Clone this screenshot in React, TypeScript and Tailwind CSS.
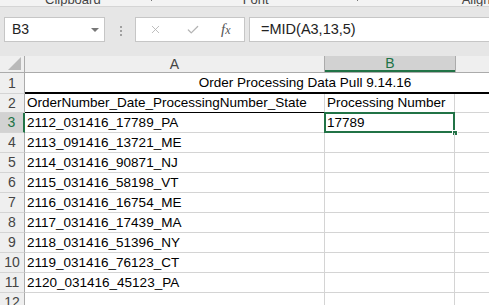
import { X, Check } from "lucide-react";

const rows: { n: number; a: string; b?: string }[] = [
  { n: 3, a: "2112_031416_17789_PA", b: "17789" },
  { n: 4, a: "2113_091416_13721_ME" },
  { n: 5, a: "2114_031416_90871_NJ" },
  { n: 6, a: "2115_031416_58198_VT" },
  { n: 7, a: "2116_031416_16754_ME" },
  { n: 8, a: "2117_031416_17439_MA" },
  { n: 9, a: "2118_031416_51396_NY" },
  { n: 10, a: "2119_031416_76123_CT" },
  { n: 11, a: "2120_031416_45123_PA" },
  { n: 12, a: "" },
];

const font = { fontFamily: '"Liberation Sans", Arial, sans-serif' };

function RowHead({ n, active }: { n: number; active?: boolean }) {
  return (
    <div
      className={
        "flex h-full w-[25px] shrink-0 items-center justify-center border-b border-[#d4d4d4] text-[14px] " +
        (active
          ? "border-r-2 border-r-[#217346] bg-[#d2d2d2] text-[#217346]"
          : "border-r border-r-[#ababab] bg-[#efefef] text-[#444]")
      }
    >
      {n}
    </div>
  );
}

export default function App() {
  return (
    <div className="h-[305px] w-[489px] overflow-hidden bg-white text-black" style={font}>
      {/* ribbon group labels, mostly scrolled off */}
      <div className="h-[7px] overflow-hidden border-b border-[#d5d5d5] bg-[#f3f3f3]">
        <div className="-mt-[10px] flex items-start text-[13px] text-[#444]">
          <span className="ml-[45px]">Clipboard</span>
          <span className="ml-[50px] mt-[7px] h-[4px] w-[4px] border-b border-r border-[#777]" />
          <span className="ml-[8px] mt-[6px] h-[10px] w-px bg-[#c8c8c8]" />
          <span className="ml-[83px]">Font</span>
          <span className="ml-[88px] mt-[7px] h-[4px] w-[4px] border-b border-r border-[#777]" />
          <span className="ml-[8px] mt-[6px] h-[10px] w-px bg-[#c8c8c8]" />
          <span className="ml-[96px]">Alignment</span>
        </div>
      </div>

      {/* formula bar */}
      <div className="flex h-[49px] items-start bg-[#e6e6e6] pt-[10px]">
        <div className="ml-[4px] flex h-[25px] w-[101px] items-center justify-between border border-[#c6c6c6] bg-white pl-[7px] pr-[5px] text-[14px] text-[#222]">
          <span>B3</span>
          <span className="h-0 w-0 border-x-[4px] border-t-[4px] border-x-transparent border-t-[#777]" />
        </div>
        <div className="ml-[15px] mt-[9px] flex flex-col gap-[2px]">
          <span className="h-[2px] w-[2px] bg-[#a0a0a0]" />
          <span className="h-[2px] w-[2px] bg-[#a0a0a0]" />
          <span className="h-[2px] w-[2px] bg-[#a0a0a0]" />
        </div>
        <div className="ml-[13px] flex h-[25px] w-[110px] items-center border border-[#c6c6c6] bg-white">
          <X className="ml-[13px] h-[13px] w-[13px] text-[#b4b4b4]" strokeWidth={1.6} />
          <Check className="ml-[24px] h-[14px] w-[14px] text-[#b4b4b4]" strokeWidth={2.2} />
          <span
            className="ml-[21px] text-[15px] italic text-[#555]"
            style={{ fontFamily: '"Liberation Serif", "Times New Roman", serif' }}
          >
            f<span className="text-[12px]">x</span>
          </span>
        </div>
        <div className="ml-[4px] flex h-[25px] flex-1 items-center border border-r-0 border-[#c6c6c6] bg-white pl-[11px] text-[14.5px] text-[#222]">
          =MID(A3,13,5)
        </div>
      </div>

      {/* column headers */}
      <div className="flex h-[17px] border-b border-[#ababab] bg-[#efefef] text-[14px] text-[#444]">
        <div className="relative w-[25px] shrink-0 border-r border-[#ababab]">
          <svg className="absolute bottom-[2px] right-[3px]" width="13" height="13" viewBox="0 0 13 13">
            <polygon points="13,0 13,13 0,13" fill="#b9b9b9" />
          </svg>
        </div>
        <div className="flex w-[300px] shrink-0 items-center justify-center border-r border-[#ababab]">A</div>
        <div className="flex w-[130px] shrink-0 items-center justify-center border-b-2 border-b-[#217346] bg-[#d2d2d2] text-[#217346]">
          B
        </div>
        <div className="flex w-[130px] shrink-0 items-center justify-center border-l border-[#ababab]">C</div>
      </div>

      {/* row 1: merged title */}
      <div className="flex h-[21px] text-[13.5px]">
        <RowHead n={1} />
        <div className="flex w-[560px] shrink-0 items-center justify-center border-b-2 border-black pt-[1px]">
          Order Processing Data Pull 9.14.16
        </div>
      </div>

      {/* row 2: column labels */}
      <div className="flex h-[19px] text-[13.5px]">
        <RowHead n={2} />
        <div className="flex w-[300px] shrink-0 items-center border-b border-r border-b-black border-r-[#d4d4d4] pl-[2px]">
          OrderNumber_Date_ProcessingNumber_State
        </div>
        <div className="flex w-[130px] shrink-0 items-center border-b border-r border-b-black border-r-[#d4d4d4] pl-[2px]">
          Processing Number
        </div>
        <div className="w-[130px] shrink-0 border-b border-[#d4d4d4]" />
      </div>

      {rows.map((r) => (
        <div key={r.n} className="flex h-[20px] text-[13.5px]">
          <RowHead n={r.n} active={r.n === 3} />
          <div className="flex w-[300px] shrink-0 items-center border-b border-r border-[#d4d4d4] pl-[2px] pt-[1px]">
            {r.a}
          </div>
          <div className="relative flex w-[130px] shrink-0 items-center border-b border-r border-[#d4d4d4] pl-[2px] pt-[1px]">
            {r.b}
            {r.n === 3 && (
              <>
                <div className="absolute -left-px -top-px bottom-[-1px] right-[-1px] border-2 border-[#217346]" />
                <div className="absolute bottom-[-4px] right-[-4px] h-[6px] w-[6px] border border-white bg-[#217346]" />
              </>
            )}
          </div>
          <div className="w-[130px] shrink-0 border-b border-[#d4d4d4]" />
        </div>
      ))}
    </div>
  );
}
